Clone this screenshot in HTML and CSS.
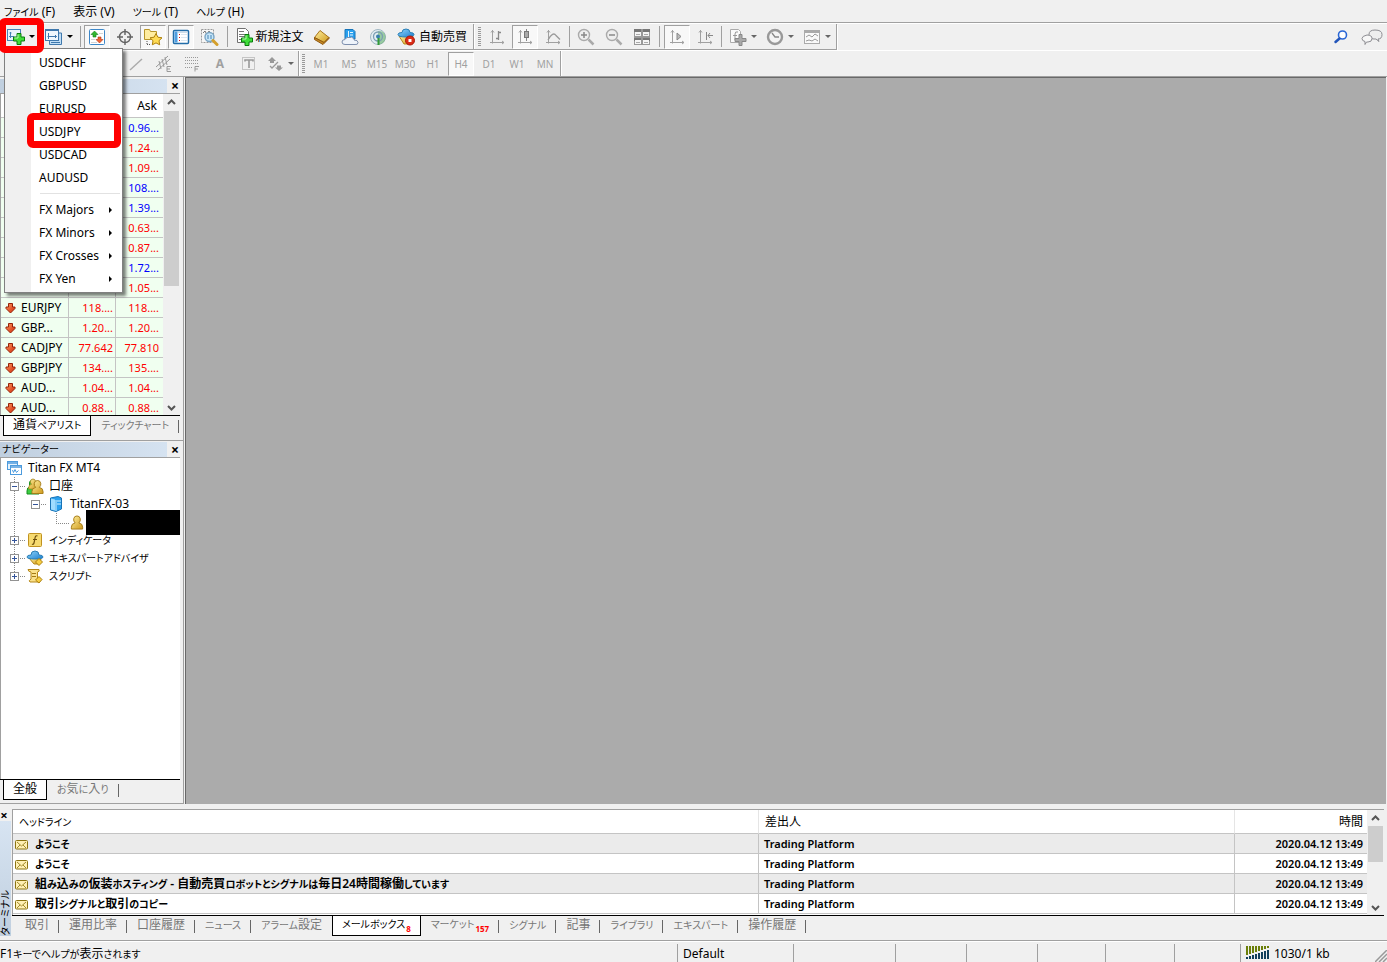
FILE: index.html
```html
<!DOCTYPE html>
<html lang="ja">
<head>
<meta charset="utf-8">
<title>Titan FX MT4</title>
<link rel="stylesheet" href="styles.css">
</head>
<body>
<svg class="defs" width="0" height="0" aria-hidden="true">
  <defs>
    <linearGradient id="gold" x1="0" y1="0" x2="1" y2="1"><stop offset="0" stop-color="#fff0a0"/><stop offset="1" stop-color="#cf9a1c"/></linearGradient>
    <linearGradient id="blue" x1="0" y1="0" x2="1" y2="1"><stop offset="0" stop-color="#8fd4fa"/><stop offset="1" stop-color="#1c7fcf"/></linearGradient>
    <linearGradient id="red" x1="0" y1="0" x2="1" y2="1"><stop offset="0" stop-color="#ff9a5c"/><stop offset="1" stop-color="#d02808"/></linearGradient>
  </defs>
  <symbol id="plus" viewBox="0 0 12 12"><path d="M4 .5h4V4h3.500v4H8v3.500H4V8H.5V4H4z" fill="#3fdc3a" stroke="#087c0c"/><path d="M5 1.500v3.500H1.500" fill="none" stroke="#b4f7a8"/></symbol>
  <symbol id="down" viewBox="0 0 11 11"><path d="M3.500 .5h4v3.500h2.500v1.500L5.500 10 1 5.500V4h2.500z" fill="url(#red)" stroke="#96230a"/></symbol>
  <symbol id="mail" viewBox="0 0 14 11"><rect x=".5" y="1.500" width="12" height="8.500" rx="1" fill="#fff0b4" stroke="#8c7411"/><path d="M2 3l4.500 4L11 3M2 9l3-3M11 9L8 6" fill="none" stroke="#a48b2a"/></symbol>
  <symbol id="person" viewBox="0 0 14 16"><path d="M1 15v-2q0-4 4-4.500Q3 6.500 3.500 4 4 1 7 1t3.500 3q.5 2.500-1.500 4.500 4 .5 4 4.500v2z" fill="url(#gold)" stroke="#a47a14"/></symbol>
  <symbol id="axes" viewBox="0 0 18 18"><path d="M4.500 2v13.500M2 14.500h14M3 4.500l1.500-2L6 4.500M14 13l2 1.500-2 1.500" fill="none" stroke="#a0a0a0"/></symbol>
</svg>

<header class="chrome">
  <nav class="menubar">
    <button><span class="kana">ファイル</span> (F)</button><button>表示 (V)</button><button><span class="kana">ツール</span> (T)</button><button><span class="kana">ヘルプ</span> (H)</button>
  </nav>
  <div class="toolbar">
    <div class="group main">
      <button class="tool drop" aria-label="新規チャート"><svg width="18" height="18" viewBox="0 0 18 18"><rect x=".5" y="1.500" width="13" height="11" fill="#e9f4fd" stroke="#4583b7"/><path d="M3.500 4v6M2 8.500h5M2.500 5h2" fill="none" stroke="#4583b7"/><use href="#plus" x="6" y="5" width="12" height="12"/></svg><i class="arrow"></i></button>
      <button class="tool drop" aria-label="プロファイル"><svg width="18" height="18" viewBox="0 0 18 18"><path d="M4 5h12.500v11.500h-12V12" fill="#c1def5" stroke="#3f78ac"/><rect x=".5" y="1.500" width="13" height="11" fill="#eff7fd" stroke="#3f78ac"/><path d="M1 2.500h12M3.500 5v6M2.500 8.500h9M10 7l1.500 1.500L10 10M6 14.500h9" fill="none" stroke="#3f78ac"/></svg><i class="arrow"></i></button>
      <span class="sep"></span>
      <button class="tool on" aria-label="通貨ペアリスト"><svg width="18" height="18" viewBox="0 0 18 18"><rect x="1.500" y="1.500" width="15" height="15" rx="1" fill="#fff" stroke="#3d87c8"/><path d="M11 5.500h4M3 11.500h4M3 14.500h6" stroke="#d4d4d4"/><path d="M6.500 3l3.500 3.500H8V9H5V6.500H3z" fill="#31b72f" stroke="#16801a" stroke-width=".6"/><path d="M11.500 15L8 11.500h2V9h3v2.500h2z" fill="#f06437" stroke="#b3340f" stroke-width=".6"/></svg></button>
      <button class="tool" aria-label="データウィンドウ"><svg width="18" height="18" viewBox="0 0 18 18"><circle cx="9" cy="9" r="5.500" fill="none" stroke="#636363" stroke-width="1.400"/><path d="M9 1v6M9 11v6M1 9h6M11 9h6" stroke="#636363" stroke-width="1.400"/></svg></button>
      <button class="tool on" aria-label="ナビゲーター"><svg width="20" height="18" viewBox="0 0 20 18"><path d="M1.500 11.500v-10h5l1 2h6v8z" fill="#ffeda0" stroke="#b8962b"/><path d="M4 13v4M4 16.500h4" stroke="#555" stroke-dasharray="1 1"/><path d="M13 5.500l1.900 3.700 4.100.6-3 2.900.7 4.100-3.700-1.900-3.700 1.900.7-4.100-3-2.900 4.100-.6z" fill="#ffdc55" stroke="#ad800e"/></svg></button>
      <button class="tool on" aria-label="ターミナル"><svg width="18" height="18" viewBox="0 0 18 18"><rect x="1.500" y="2.500" width="15" height="13" rx="1" fill="#fff" stroke="#226da9" stroke-width="1.500"/><rect x="2.500" y="3.500" width="3" height="11" fill="#4f9ee0"/><path d="M6 4.500h10" stroke="#ccdbe8"/><path d="M7 6.500h1M7 9.500h1M7 12.500h1" stroke="#d11"/><path d="M9 6.500h6M9 9.500h6M9 12.500h6" stroke="#dce8f2"/></svg></button>
      <button class="tool" aria-label="ストラテジーテスター"><svg width="19" height="18" viewBox="0 0 19 18"><path d="M1.500 1.500h12v13h-12z" fill="#f6f6f6" stroke="#9a9a9a" stroke-dasharray="2 1"/><path d="M3 5l2-2 2 4 2-4 2 3" fill="none" stroke="#777"/><circle cx="9.500" cy="9" r="4.500" fill="#c3e4fa" fill-opacity=".9" stroke="#7aa5c4" stroke-width="1.400"/><path d="M8 7v4M11 7v4" stroke="#4484b4"/><path d="M13 12.500l4 4" stroke="#d49f2b" stroke-width="3" stroke-linecap="round"/></svg></button>
      <span class="sep wide"></span>
      <button class="tool order"><svg width="18" height="19" viewBox="0 0 18 19"><path d="M1.500 1.500h8l3 3v11h-11z" fill="#fff" stroke="#707070"/><path d="M3 4.500h5M3 7.500h7M3 9.500h6M3 12.500h4" stroke="#777"/><use href="#plus" x="5" y="7" width="12" height="12"/></svg>新規注文</button>
      <button class="tool" aria-label="メタエディター"><svg width="18" height="18" viewBox="0 0 18 18"><path d="M1.500 9.500L7 2.500l9 7-5 5z" fill="url(#gold)" stroke="#a8741b"/><path d="M1.500 9.500v2l8.500 5 6-6v-1L11 14.500z" fill="#c98a24" stroke="#8e5810"/></svg></button>
      <button class="tool" aria-label="MQL5"><svg width="18" height="18" viewBox="0 0 18 18"><path d="M4 1.500h8l2 2V11H4z" fill="#2aa0ee" stroke="#1774b8"/><path d="M7.500 3v7M9 4.500h3M9 7h3" stroke="#e6f7ff"/><path d="M4 16.500q-3 0-3-2.500t3-2.500q1.500-3 5-2 1.500-1 3 .5t1 2q4 0 4 2.500t-3 2z" fill="#eef3fa" stroke="#7d8fae"/></svg></button>
      <button class="tool" aria-label="シグナル"><svg width="18" height="18" viewBox="0 0 18 18"><circle cx="9" cy="9" r="7.500" fill="#e2edf2" stroke="#a0b6c2"/><path d="M9 9l1 7.500Q17 15.500 16.500 8 15 2.500 9 3z" fill="#68b36b" opacity=".6"/><circle cx="9" cy="8.500" r="4.500" fill="none" stroke="#7b9db3" stroke-width="1.300"/><circle cx="9" cy="8.500" r="2" fill="#3a7fae"/><path d="M9.500 10v7" stroke="#349b37" stroke-width="2"/></svg></button>
      <button class="tool auto"><svg width="18" height="18" viewBox="0 0 18 18"><path d="M2 8l5 8h6l3-8z" fill="url(#gold)" stroke="#b58719"/><path d="M1 6.500q0-2 4-2Q5 1 9 1t4 3.500q4 0 4 2 0 2.500-8 2.500T1 6.500z" fill="url(#blue)" stroke="#2b7fb6"/><circle cx="13" cy="12.500" r="4.500" fill="#dc2c17" stroke="#a71708"/><rect x="11.500" y="11" width="3" height="3" fill="#fff"/></svg>自動売買</button>
    </div>
    <div class="group gray">
      <i class="grip"></i>
      <button class="tool" aria-label="バーチャート"><svg width="18" height="18" viewBox="0 0 18 18"><use href="#axes" width="18" height="18"/><path d="M10.500 3v9M8 10.500h2.500M10.500 4.500H13" stroke="#888" stroke-width="1.300"/></svg></button>
      <button class="tool on" aria-label="ローソク足"><svg width="18" height="18" viewBox="0 0 18 18"><use href="#axes" width="18" height="18"/><path d="M10.500 1v12" stroke="#888"/><rect x="8.500" y="3.500" width="4" height="6" fill="#aaa" stroke="#777"/></svg></button>
      <button class="tool" aria-label="ラインチャート"><svg width="18" height="18" viewBox="0 0 18 18"><use href="#axes" width="18" height="18"/><path d="M4 12q5-9 8-4.500l4 4" fill="none" stroke="#999" stroke-width="1.300"/></svg></button>
      <span class="sep"></span>
      <button class="tool" aria-label="拡大"><svg width="18" height="18" viewBox="0 0 18 18"><circle cx="7" cy="7" r="5.500" fill="#eee" stroke="#aaa" stroke-width="1.400"/><path d="M4 7h6M7 4v6" stroke="#888" stroke-width="1.500"/><path d="M11.500 11.500l5 5" stroke="#aaa" stroke-width="2.500"/></svg></button>
      <button class="tool" aria-label="縮小"><svg width="18" height="18" viewBox="0 0 18 18"><circle cx="7" cy="7" r="5.500" fill="#eee" stroke="#aaa" stroke-width="1.400"/><path d="M4 7h6" stroke="#888" stroke-width="1.500"/><path d="M11.500 11.500l5 5" stroke="#aaa" stroke-width="2.500"/></svg></button>
      <button class="tool" aria-label="整列"><svg width="18" height="18" viewBox="0 0 18 18"><path d="M1 1h16v16H1z" fill="#999"/><path d="M1 1h7v3H1zM10 1h7v3h-7zM1 10h7v3H1zM10 10h7v3h-7z" fill="#777"/><path d="M2 4h6v4H2zM10 4h6v4h-6zM2 12h6v4H2zM10 12h6v4h-6z" fill="#f5f5f5"/><path d="M3 6.500h4M11 6.500h4M3 14.500h4M11 14.500h4" stroke="#aaa"/></svg></button>
      <span class="sep mid"></span>
      <button class="tool on" aria-label="自動スクロール"><svg width="18" height="18" viewBox="0 0 18 18"><use href="#axes" width="18" height="18"/><path d="M9 5l4 3.500L9 12z" fill="#bbb" stroke="#888"/></svg></button>
      <button class="tool" aria-label="チャートシフト"><svg width="18" height="18" viewBox="0 0 18 18"><use href="#axes" width="18" height="18"/><path d="M10.500 4v8M17 7.500h-5M14 5l-2 2.500L14 10" fill="none" stroke="#888"/></svg></button>
      <span class="sep"></span>
      <button class="tool drop" aria-label="インディケータ"><svg width="18" height="18" viewBox="0 0 18 18"><path d="M1.500 1.500h8l2 2v11h-10z" fill="#fafafa" stroke="#aaa"/><path d="M9 4Q6 3 6 6v6M4 7.500h4" fill="none" stroke="#999"/><path d="M10 6.500h3v4h4v3h-4v4h-3v-4H6v-3h4z" fill="#aaa" stroke="#888"/></svg><i class="arrow dim"></i></button>
      <button class="tool drop" aria-label="時間足"><svg width="18" height="18" viewBox="0 0 18 18"><circle cx="9" cy="9" r="7" fill="#f4f4f4" stroke="#999" stroke-width="2.400"/><path d="M6 5l3 4h4" fill="none" stroke="#888" stroke-width="1.300"/></svg><i class="arrow dim"></i></button>
      <button class="tool drop" aria-label="テンプレート"><svg width="18" height="18" viewBox="0 0 18 18"><rect x="1.500" y="2.500" width="15" height="13" fill="#f9f9f9" stroke="#aaa"/><path d="M2 4h14" stroke="#aaa" stroke-width="2"/><path d="M3 9l3-2 3 2 3-3 3 2M3 13l3-1 3 1 3-2 3 2" fill="none" stroke="#999"/></svg><i class="arrow dim"></i></button>
    </div>
    <div class="extras">
      <button aria-label="検索"><svg width="16" height="16" viewBox="0 0 16 16"><circle cx="9.500" cy="6" r="4" fill="#fff" stroke="#2a67d6" stroke-width="1.600"/><path d="M6.500 9.500L2.500 13" stroke="#2255ba" stroke-width="2.500" stroke-linecap="round"/></svg></button>
      <button aria-label="チャット"><svg width="22" height="18" viewBox="0 0 22 18"><path d="M14 2q7 0 7 4.500T17 11l1 2.500-3-2.500H13Q8 11 8 6.500T14 2z" fill="#eee" stroke="#8d8d92"/><path d="M6 7q5 0 5 3.500T7 14H5.500L4 16.500v-3Q1 13 1 10.500T6 7z" fill="#f7f7f7" stroke="#8d8d92"/></svg></button>
    </div>
  </div>
  <div class="toolbar second">
    <div class="group gray draw">
      <button class="tool" aria-label="トレンドライン"><svg width="18" height="18" viewBox="0 0 18 18"><path d="M3 15L15 4" stroke="#aaa" stroke-width="1.400"/></svg></button>
      <button class="tool" aria-label="チャネル"><svg width="18" height="18" viewBox="0 0 18 18"><path d="M1 12L13 1M3 15L15 4M4 6l2 8M7 4l2 8M10 2l2 8" stroke="#999"/><path d="M16 11.500h-4v5h4M12 14h3" fill="none" stroke="#999"/></svg></button>
      <button class="tool" aria-label="フィボナッチ"><svg width="18" height="18" viewBox="0 0 18 18"><path d="M2 2.500h13M2 5.500h13M2 8.500h13M2 12.500h8" stroke="#999" stroke-dasharray="1 1"/><path d="M16 11.500h-4v5M12 14h3" fill="none" stroke="#999"/></svg></button>
      <button class="tool letter">A</button>
      <button class="tool" aria-label="ラベル"><svg width="18" height="18" viewBox="0 0 18 18"><path d="M3.500 2.500h12v12h-12z" fill="none" stroke="#999" stroke-dasharray="1 1"/><path d="M6 6.500V5h8v1.500M10 5v8" fill="none" stroke="#999" stroke-width="1.600"/></svg></button>
      <button class="tool drop" aria-label="矢印"><svg width="18" height="18" viewBox="0 0 18 18"><path d="M6 2l4 4H8v2H4V6H2zM13 16l-4-3.500h2v-2h4v2h2z" fill="#999"/><path d="M4 11l2 2 6-6" fill="none" stroke="#999" stroke-width="1.300"/></svg><i class="arrow dim"></i></button>
    </div>
    <div class="group times">
      <i class="grip"></i>
      <button class="tool">M1</button><button class="tool">M5</button><button class="tool">M15</button><button class="tool">M30</button><button class="tool">H1</button><button class="tool on">H4</button><button class="tool">D1</button><button class="tool">W1</button><button class="tool">MN</button>
    </div>
  </div>
</header>

<main class="desk">
  <aside class="side">
    <section class="pane watch">
      <div class="caption"><span></span><button aria-label="閉じる">×</button></div>
      <div class="scroller">
        <div class="clip">
        <table class="quotes">
          <thead><tr><th class="sym"></th><th></th><th>Ask</th></tr></thead>
          <tbody>
            <tr class="up"><td></td><td></td><td>0.96...</td></tr>
            <tr><td></td><td></td><td>1.24...</td></tr>
            <tr><td></td><td></td><td>1.09...</td></tr>
            <tr class="up"><td></td><td></td><td>108....</td></tr>
            <tr class="up"><td></td><td></td><td>1.39...</td></tr>
            <tr><td></td><td></td><td>0.63...</td></tr>
            <tr><td></td><td></td><td>0.87...</td></tr>
            <tr class="up"><td></td><td></td><td>1.72...</td></tr>
            <tr><td></td><td></td><td>1.05...</td></tr>
            <tr><td><svg width="11" height="11"><use href="#down"/></svg>EURJPY</td><td>118....</td><td>118....</td></tr>
            <tr><td><svg width="11" height="11"><use href="#down"/></svg>GBP...</td><td>1.20...</td><td>1.20...</td></tr>
            <tr><td><svg width="11" height="11"><use href="#down"/></svg>CADJPY</td><td>77.642</td><td>77.810</td></tr>
            <tr><td><svg width="11" height="11"><use href="#down"/></svg>GBPJPY</td><td>134....</td><td>135....</td></tr>
            <tr><td><svg width="11" height="11"><use href="#down"/></svg>AUD...</td><td>1.04...</td><td>1.04...</td></tr>
            <tr><td><svg width="11" height="11"><use href="#down"/></svg>AUD...</td><td>0.88...</td><td>0.88...</td></tr>
          </tbody>
        </table>
        </div>
        <div class="bar"><svg width="9" height="6"><path d="M1 5l3.500-3.500L8 5" fill="none" stroke="#555" stroke-width="2"/></svg><i class="thumb"></i><svg width="9" height="6"><path d="M1 1l3.500 3.500L8 1" fill="none" stroke="#555" stroke-width="2"/></svg></div>
      </div>
      <div class="tabs"><button class="active">通貨<span class="kana">ペアリスト</span></button><button><span class="kana">ティックチャート</span></button></div>
    </section>
    <section class="pane nav">
      <div class="caption"><span class="kana">ナビゲーター</span><button aria-label="閉じる">×</button></div>
      <ul class="tree">
        <li><svg class="ico" width="15" height="15" viewBox="0 0 15 15"><rect x=".5" y=".5" width="10" height="8" fill="#e6f3fd" stroke="#4d9bdd"/><rect x="3.500" y="4.500" width="11" height="9" fill="#fff" stroke="#4d9bdd"/><path d="M1 2h9M4 6h10" stroke="#4d9bdd" stroke-width="1.500"/><path d="M5.500 9l1 2.500 1.500-3 1.500 3 2-2" fill="none" stroke="#4d9bdd"/></svg>Titan FX MT4</li>
        <li class="l1"><i class="box"></i><svg class="ico" width="18" height="17" viewBox="0 0 18 17"><path d="M1 16v-3q0-4 3-4-2-7 3-7 4 0 3 7 3 0 3 4v3z" fill="#3ccd43" stroke="#168d1d"/><use href="#person" x="2" y="0" width="10" height="12"/><use href="#person" x="5" y="1" width="13" height="16"/></svg>口座</li>
        <li class="l2"><i class="box"></i><svg class="ico" width="14" height="16" viewBox="0 0 14 16"><path d="M1.500 2L9 .5l3.500 1.500v11L7 15.500 1.500 14z" fill="#2aa0ee" stroke="#1873b6"/><path d="M2 2.500l4 1v11l-4-1z" fill="#9fdcff"/><path d="M7 4v11M8 5h4M8 8h4" stroke="#d9f4ff"/></svg>TitanFX-03</li>
        <li class="l3"><svg class="ico" width="14" height="15"><use href="#person"/></svg><span class="mask"></span></li>
        <li class="l1"><i class="box add"></i><svg class="ico" width="16" height="16" viewBox="0 0 16 16"><rect x="1.500" y="1.500" width="13" height="13" rx="1" fill="#f6da70" stroke="#c19220"/><path d="M10.500 4q-2-1-2.500 2l-1 5q-.5 2-2 1M6 7.500h4" fill="none" stroke="#6c4d0a" stroke-width="1.200"/></svg><span class="kana">インディケータ</span></li>
        <li class="l1"><i class="box add"></i><svg class="ico" width="18" height="16" viewBox="0 0 18 16"><path d="M3 8l5 6h5l2-5z" fill="url(#gold)" stroke="#b58719"/><path d="M1 7q0-2 4-2 0-4 4-4t4 4q4 0 4 2 0 2-8 2T1 7z" fill="url(#blue)" stroke="#2b7fb6"/><path d="M13 8.500l3.500 3.500-3.500 3.500L9.500 12z" fill="#f8cf44" stroke="#ad800e"/></svg><span class="kana">エキスパートアドバイザ</span></li>
        <li class="l1 last"><i class="box add"></i><svg class="ico" width="16" height="16" viewBox="0 0 16 16"><path d="M1 1.500h11q1 2-1.500 2.500v7h2v3H3q-2-1 1-3v-7Q1 3.500 1 1.500z" fill="#f9e08a" stroke="#b58719"/><path d="M5 5.500h4M5 8.500h4" stroke="#a47a14"/><path d="M12 8.500l3 3-3 3.500L8.500 12z" fill="#f8cf44" stroke="#ad800e"/></svg><span class="kana">スクリプト</span></li>
      </ul>
      <div class="tabs"><button class="active">全般</button><button><span class="kana">お</span>気<span class="kana">に</span>入<span class="kana">り</span></button></div>
    </section>
  </aside>
  <div class="workspace"></div>
</main>

<section class="terminal">
  <div class="handle"><button aria-label="閉じる">×</button><div class="strip"><span>ターミナル</span></div></div>
  <div class="mailpane">
    <div class="scroller">
      <div class="clip">
      <table class="mails">
        <thead><tr><th><span class="kana">ヘッドライン</span></th><th class="from">差出人</th><th class="date">時間</th></tr></thead>
        <tbody>
          <tr><td><svg width="14" height="11"><use href="#mail"/></svg><span class="kana">ようこそ</span></td><td>Trading Platform</td><td>2020.04.12 13:49</td></tr>
          <tr><td><svg width="14" height="11"><use href="#mail"/></svg><span class="kana">ようこそ</span></td><td>Trading Platform</td><td>2020.04.12 13:49</td></tr>
          <tr><td><svg width="14" height="11"><use href="#mail"/></svg>組<span class="kana">み</span>込<span class="kana">みの</span>仮装<span class="kana">ホスティング</span> - 自動売買<span class="kana">ロボットとシグナルは</span>毎日24時間稼働<span class="kana">しています</span></td><td>Trading Platform</td><td>2020.04.12 13:49</td></tr>
          <tr><td><svg width="14" height="11"><use href="#mail"/></svg>取引<span class="kana">シグナルと</span>取引<span class="kana">のコピー</span></td><td>Trading Platform</td><td>2020.04.12 13:49</td></tr>
        </tbody>
      </table>
      </div>
      <div class="bar"><svg width="9" height="6"><path d="M1 5l3.500-3.500L8 5" fill="none" stroke="#555" stroke-width="2"/></svg><i class="thumb"></i><svg width="9" height="6"><path d="M1 1l3.500 3.500L8 1" fill="none" stroke="#555" stroke-width="2"/></svg></div>
    </div>
    <div class="tabs">
      <button>取引</button><button>運用比率</button><button>口座履歴</button><button><span class="kana">ニュース</span></button><button class="before"><span class="kana">アラーム</span>設定</button><button class="active"><span class="kana">メールボックス</span><sub>8</sub></button><button><span class="kana">マーケット</span><sub>157</sub></button><button><span class="kana">シグナル</span></button><button>記事</button><button><span class="kana">ライブラリ</span></button><button><span class="kana">エキスパート</span></button><button>操作履歴</button>
    </div>
  </div>
</section>

<footer class="status">
  <span class="help">F1<b class="kana">キーでヘルプが</b>表示<b class="kana">されます</b></span>
  <span class="c116">Default</span><span class="c102"></span><span class="c71"></span><span class="c71"></span><span class="c68"></span><span class="c69"></span><span class="c66"></span>
  <span class="net"><svg width="24" height="14" viewBox="0 0 24 14"><path d="M1 0v9M4 0v8M7 0v7M10 0v6M13 0v5M16 0v4M19 0v3M22 0v2" stroke="#6b7f0a" stroke-width="2"/><path d="M1 11v2M4 10v3M7 9v4M10 8v5M13 7v6M16 6v7M19 5v8M22 4v9" stroke="#123f5c" stroke-width="2"/></svg>1030/1 kb</span>
  <svg class="resize" width="12" height="12"><path d="M0 12L12 0M4 12l8-8M8 12l4-4" stroke="#999" stroke-width="1.500"/></svg>
</footer>

<div class="popup" role="menu">
  <button>USDCHF</button><button>GBPUSD</button><button>EURUSD</button><button>USDJPY</button><button>USDCAD</button><button>AUDUSD</button>
  <hr>
  <button class="more">FX Majors</button><button class="more">FX Minors</button><button class="more">FX Crosses</button><button class="more">FX Yen</button>
</div>
<div class="ring ring-tool"></div>
<div class="ring ring-item"></div>
</body>
</html>
```
FILE: styles.css
```css
* { box-sizing: border-box; }
body {
  margin: 0; height: 100vh; display: flex; flex-direction: column; overflow: hidden; position: relative;
  background: #f0f0f0; color: #000;
  font: 12px/16px "Noto Sans", "Noto Sans CJK JP", sans-serif;
  font-feature-settings: "palt";
}
button { font: inherit; color: inherit; font-feature-settings: inherit; background: none; border: 0; padding: 0; margin: 0; white-space: nowrap; }
svg { flex: none; }
.defs { position: absolute; }
.kana { font-size: 10px; font-weight: inherit; }

.menubar { display: flex; gap: 18px; height: 23px; padding: 1px 4px 0; align-items: center; border-bottom: 1px solid #a0a0a0; }
.toolbar { display: flex; height: 27px; border-top: 1px solid #fff; }
.toolbar.second { height: 26px; }
.chrome { border-bottom: 1px solid #a0a0a0; flex: none; }
.group { display: flex; align-items: center; border-right: 1px solid #a0a0a0; border-bottom: 1px solid #a0a0a0; box-shadow: 1px 1px #fff; padding: 0 1px 0 2px; }
.second .group { border-bottom: 0; box-shadow: 1px 0 #fff; }
.tool { width: 28px; height: 24px; display: flex; align-items: center; justify-content: center; flex: none; }
.tool.drop { width: 37px; gap: 4px; }
.main .tool.drop { width: 38px; }
.tool.on { background: #f8f8f8; border: 1px solid; border-color: #a0a0a0 #fff #fff #a0a0a0; width: 26px; margin: 0 1px; }
.tool.order { width: 76px; gap: 1px; }
.tool.auto { width: 80px; gap: 4px; }
.arrow { border: 3px solid transparent; border-top-color: #000; border-bottom: 0; }
.arrow.dim { border-top-color: #666; }
.sep { width: 1px; height: 21px; background: #a0a0a0; margin: 0 2px; }
.sep.wide { margin: 0 4px; }
.sep.mid { margin: 0 3px; }
.grip { width: 3px; height: 20px; margin: 0 2px; background: repeating-linear-gradient(#999 0 1px, transparent 1px 2px); }
.gray .letter, .times { color: #a0a0a0; }
.gray .letter { font-weight: 700; }
.times { font-size: 10px; }
.second .times { padding: 0 1px; }
.second .draw { padding: 0 0 0 122px; }
.draw .tool.drop { width: 36px; }
.extras { margin-left: auto; display: flex; gap: 12px; align-items: center; padding-right: 4px; }
.extras button { display: flex; }

.desk { flex: 1; min-height: 0; display: flex; }
.side { width: 184px; flex: none; display: flex; flex-direction: column; padding-top: 2px; border-right: 1px solid #a0a0a0; border-bottom: 1px solid #a0a0a0; }
.workspace { flex: 1; background: #ababab; border-left: 1px solid #696969; border-top: 1px solid #696969; margin: 0 1px; }
.pane { display: flex; flex-direction: column; min-height: 0; padding-right: 3px; }
.watch { height: 362px; flex: none; border-bottom: 1px solid #a0a0a0; padding-bottom: 4px; }
.nav { flex: 1; padding-top: 1px; padding-bottom: 3px; }
.caption { display: flex; height: 15px; line-height: 14px; justify-content: space-between; padding-left: 2px; background: linear-gradient(90deg, #c0cfdf, #d7e4f2); flex: none; }
.watch .caption { height: 14px; }
.caption button { width: 13px; background: #f0f0f0; font: 700 14px/12px "Noto Sans", sans-serif; text-align: right; padding-right: 1px; }
.scroller { display: flex; flex: 1; min-height: 0; border-top: 1px solid #a0a0a0; border-left: 1px solid #a0a0a0; }
.clip { flex: 1; min-width: 0; overflow: hidden; background: #fff; }
.bar { width: 17px; flex: none; display: flex; flex-direction: column; align-items: center; padding: 5px 0 4px; }
.thumb { width: 15px; flex: none; height: 175px; margin: 6px 0 auto; background: #cdcdcd; }
.terminal .thumb { height: 36px; margin-top: 5px; }
table { width: 100%; table-layout: fixed; border-collapse: separate; border-spacing: 0; }
td, th { padding: 0; height: 20px; line-height: 16px; white-space: nowrap; overflow: hidden; }
th { height: 24px; font-weight: 400; text-align: right; }
.quotes td, .quotes th { border-bottom: 1px solid #c4c4c4; border-right: 1px solid #c4c4c4; text-align: right; padding-right: 4px; }
.quotes th { border-right-color: #e5e5e5; width: 47px; padding-right: 6px; }
.quotes th.sym { width: auto; }
.quotes td { background: #f0fff0; color: #f00; font-size: 11px; }
.quotes .up td { color: #00f; }
.quotes td:nth-child(2) { padding-right: 2px; }
.quotes td:first-child { color: #000; text-align: left; padding: 0 0 0 4px; font-size: 12px; }
.quotes td:last-child, .quotes th:last-child { border-right: 0; }
.quotes td svg { vertical-align: -2px; margin-right: 5px; }

.tabs { display: flex; height: 21px; flex: none; border-top: 1px solid #000; color: #777; padding-left: 3px; }
.tabs button { position: relative; padding: 0 10px 3px; line-height: 16px; }
.tabs button:not(.active):not(.before)::after { content: ""; position: absolute; right: 0; top: 4px; height: 13px; width: 1px; background: #666; }
.tabs .active { background: #fff; color: #000; border: 1px solid #000; border-top: 0; padding: 0 9px 2px; }
.tabs sub { color: #f00; font: 700 8px/8px "Noto Sans", sans-serif; vertical-align: -4px; margin-left: 1px; }

.tree { flex: 1; margin: 0; padding: 1px 0; list-style: none; background: #fff; border-top: 1px solid #a0a0a0; border-left: 1px solid #a0a0a0; overflow: hidden; }
.tree li { display: flex; align-items: center; height: 18px; gap: 6px; padding-left: 6px; }
.tree .l1, .tree .l2, .tree .l3 { background: repeating-linear-gradient(#888 0 1px, #fff 1px 2px) 13px 0/1px 100% no-repeat; }
.tree .l1 { padding-left: 9px; gap: 5px; }
.tree .l1.last { background-size: 1px 9px; }
.tree .l2 { padding-left: 30px; gap: 7px; }
.tree .l3 { padding-left: 69px; gap: 2px; position: relative; }
.tree .l3::before { content: ""; position: absolute; left: 55px; top: 0; width: 12px; height: 10px; border: 1px dotted #888; border-width: 0 0 1px 1px; }
.mask { flex: 1; height: 25px; background: #000; position: relative; z-index: 1; }
.box { width: 9px; height: 9px; flex: none; border: 1px solid #929292; background: linear-gradient(#33549a, #33549a) 1px 3px/5px 1px no-repeat, #fff; position: relative; }
.box.add { background: linear-gradient(#33549a, #33549a) 1px 3px/5px 1px no-repeat, linear-gradient(#33549a, #33549a) 3px 1px/1px 5px no-repeat, #fff; }
.box::after { content: ""; position: absolute; left: 9px; top: 3px; width: 5px; border-top: 1px dotted #888; }
.l1 .ico { width: 18px; margin-left: 2px; }
.l2 .ico { margin-left: 2px; }

.terminal { height: 137px; flex: none; display: flex; padding: 5px 3px 4px 0; border-bottom: 1px solid #a0a0a0; }
.handle { width: 12px; flex: none; display: flex; flex-direction: column; }
.handle button { width: 8px; height: 12px; font: 700 13px/10px "Noto Sans", sans-serif; }
.strip { width: 11px; flex: 1; display: flex; align-items: flex-end; background: linear-gradient(#d7e4f2, #c0cfdf); }
.strip span { writing-mode: vertical-rl; text-orientation: sideways; transform: rotate(180deg); line-height: 11px; font-size: 10px; white-space: nowrap; }
.mailpane { flex: 1; min-width: 0; display: flex; flex-direction: column; }
.mails th { border-right: 1px solid #e5e5e5; border-bottom: 1px solid #c4c4c4; text-align: left; padding: 0 6px; }
.mails td { border-right: 1px solid #c4c4c4; border-bottom: 1px solid #c4c4c4; font-weight: 600; font-size: 11px; padding: 0 5px; }
.mails td:first-child { padding-left: 2px; font-size: 12px; }
.mails td svg { vertical-align: -2px; margin-right: 6px; }
.mails .from { width: 476px; }
.mails .date { width: 132px; }
.mails .date, .mails td:last-child { text-align: right; border-right: 0; padding-right: 4px; }
.mails tbody tr:nth-child(odd) { background: #ebebeb; }

.status { height: 21px; flex: none; display: flex; align-items: flex-end; border-top: 1px solid #fff; }
.status span { height: 18px; flex: none; border-left: 1px solid #a0a0a0; padding: 2px 0 0 5px; }
.status .help { flex: 1; border: 0; padding-left: 0; }
.c116 { width: 116px; } .c102 { width: 102px; } .c71 { width: 71px; } .c68 { width: 68px; } .c69 { width: 69px; } .c66 { width: 66px; }
.net { width: 135px; display: flex; gap: 4px; }
.resize { align-self: flex-end; }

.popup { position: absolute; left: 4px; top: 48px; width: 119px; padding: 2px 0; display: flex; flex-direction: column; border: 1px solid #808080; background: linear-gradient(90deg, #f0f0f0 26px, #fff 26px); box-shadow: 3px 3px 3px rgba(0, 0, 0, .5); }
.popup button { height: 23px; text-align: left; padding-left: 34px; display: flex; align-items: center; }
.popup hr { width: 80px; border: 0; border-top: 1px solid #e2e2e2; margin: 4px 2px 4px auto; }
.popup .more::after { content: ""; margin: 0 10px 0 auto; border: 3px solid transparent; border-left-color: #000; border-right: 0; }
.ring { position: absolute; border: 7px solid #f00; border-radius: 6px; pointer-events: none; }
.ring-tool { left: -1px; top: 18px; width: 45px; height: 35px; }
.ring-item { left: 27px; top: 113px; width: 94px; height: 35px; }
```
